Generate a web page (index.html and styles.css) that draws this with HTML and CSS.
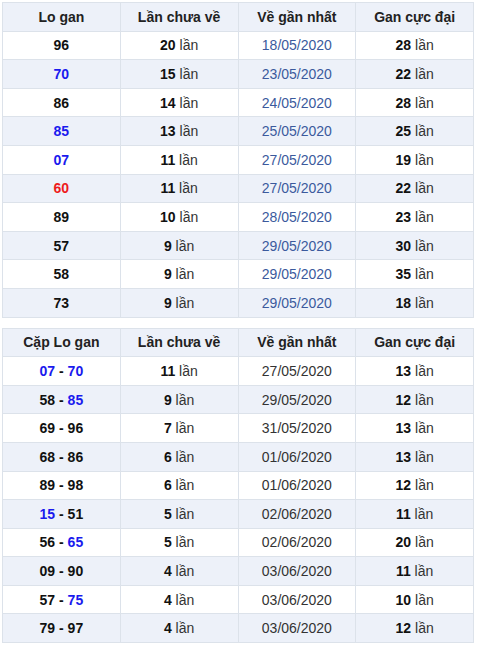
FILE: index.html
```html
<!DOCTYPE html>
<html lang="vi">
<head>
<meta charset="utf-8">
<link rel="stylesheet" href="styles.css">
</head>
<body>
<table class="tbl first">
  <thead>
    <tr><th>Lo gan</th><th>Lần chưa về</th><th>Về gần nhất</th><th>Gan cực đại</th></tr>
  </thead>
  <tbody>
    <tr><td class="num">96</td><td><b>20</b> lần</td><td class="date">18/05/2020</td><td><b>28</b> lần</td></tr>
    <tr><td class="num blue">70</td><td><b>15</b> lần</td><td class="date">23/05/2020</td><td><b>22</b> lần</td></tr>
    <tr><td class="num">86</td><td><b>14</b> lần</td><td class="date">24/05/2020</td><td><b>28</b> lần</td></tr>
    <tr><td class="num blue">85</td><td><b>13</b> lần</td><td class="date">25/05/2020</td><td><b>25</b> lần</td></tr>
    <tr><td class="num blue">07</td><td><b>11</b> lần</td><td class="date">27/05/2020</td><td><b>19</b> lần</td></tr>
    <tr><td class="num red">60</td><td><b>11</b> lần</td><td class="date">27/05/2020</td><td><b>22</b> lần</td></tr>
    <tr><td class="num">89</td><td><b>10</b> lần</td><td class="date">28/05/2020</td><td><b>23</b> lần</td></tr>
    <tr><td class="num">57</td><td><b>9</b> lần</td><td class="date">29/05/2020</td><td><b>30</b> lần</td></tr>
    <tr><td class="num">58</td><td><b>9</b> lần</td><td class="date">29/05/2020</td><td><b>35</b> lần</td></tr>
    <tr><td class="num">73</td><td><b>9</b> lần</td><td class="date">29/05/2020</td><td><b>18</b> lần</td></tr>
  </tbody>
</table>
<table class="tbl second">
  <thead>
    <tr><th>Cặp Lo gan</th><th>Lần chưa về</th><th>Về gần nhất</th><th>Gan cực đại</th></tr>
  </thead>
  <tbody>
    <tr><td class="num"><span class="blue">07</span> - <span class="blue">70</span></td><td><b>11</b> lần</td><td class="date">27/05/2020</td><td><b>13</b> lần</td></tr>
    <tr><td class="num">58 - <span class="blue">85</span></td><td><b>9</b> lần</td><td class="date">29/05/2020</td><td><b>12</b> lần</td></tr>
    <tr><td class="num">69 - 96</td><td><b>7</b> lần</td><td class="date">31/05/2020</td><td><b>13</b> lần</td></tr>
    <tr><td class="num">68 - 86</td><td><b>6</b> lần</td><td class="date">01/06/2020</td><td><b>13</b> lần</td></tr>
    <tr><td class="num">89 - 98</td><td><b>6</b> lần</td><td class="date">01/06/2020</td><td><b>12</b> lần</td></tr>
    <tr><td class="num"><span class="blue">15</span> - 51</td><td><b>5</b> lần</td><td class="date">02/06/2020</td><td><b>11</b> lần</td></tr>
    <tr><td class="num">56 - <span class="blue">65</span></td><td><b>5</b> lần</td><td class="date">02/06/2020</td><td><b>20</b> lần</td></tr>
    <tr><td class="num">09 - 90</td><td><b>4</b> lần</td><td class="date">03/06/2020</td><td><b>11</b> lần</td></tr>
    <tr><td class="num">57 - <span class="blue">75</span></td><td><b>4</b> lần</td><td class="date">03/06/2020</td><td><b>10</b> lần</td></tr>
    <tr><td class="num">79 - 97</td><td><b>4</b> lần</td><td class="date">03/06/2020</td><td><b>12</b> lần</td></tr>
  </tbody>
</table>
</body>
</html>
```
FILE: styles.css
```css
html, body {
  margin: 0;
  padding: 0;
  background: #ffffff;
}
body {
  padding: 2px 6px 0 2px;
  font-family: "Liberation Sans", Arial, sans-serif;
  font-size: 14px;
  color: #333333;
}
.tbl {
  width: 472px;
  border-collapse: collapse;
  table-layout: fixed;
  margin: 0 0 10px 0;
}
.tbl th,
.tbl td {
  border: 1px solid #dce2ea;
  text-align: center;
  padding: 0;
  height: 27.6px;
}
.tbl th {
  font-weight: bold;
  color: #222222;
  background: #edf1f9;
}
.tbl tbody tr:nth-child(even) td {
  background: #edf1f9;
}
.tbl b {
  color: #111111;
}
.num {
  font-weight: bold;
  color: #111111;
}
.blue {
  color: #1a1aee;
}
.red {
  color: #ee1c1c;
}
.first .date {
  color: #3b5a9d;
}
.second .date {
  color: #333333;
}
```
